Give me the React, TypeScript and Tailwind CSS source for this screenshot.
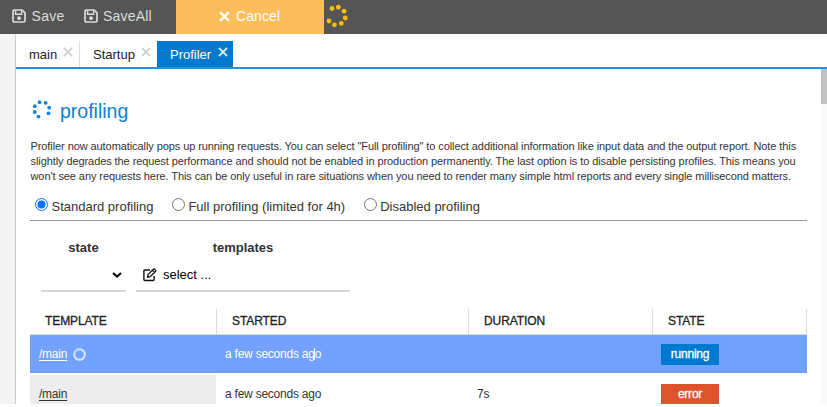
import type { ReactNode } from "react";

function SaveIcon() {
  return (
    <svg className="block h-[14px] w-[14px] shrink-0" viewBox="0 0 14 14" fill="none" stroke="#dcdcdc" strokeWidth="1.7">
      <path d="M1 2.2Q1 1 2.2 1H10.2L13 3.8V11.8Q13 13 11.8 13H2.2Q1 13 1 11.8Z" />
      <path d="M3.6 1.5V5.2H9.6V1.5" strokeWidth="1.4" />
      <circle cx="7" cy="9.2" r="1.9" fill="#dcdcdc" stroke="none" />
    </svg>
  );
}

function Cross({ className, color, width }: { className: string; color: string; width: number }) {
  return (
    <svg className={className} viewBox="0 0 10 10" stroke={color} strokeWidth={width}>
      <path d="M1 1L9 9M9 1L1 9" />
    </svg>
  );
}

function Dots({ className, points, color, r }: { className: string; points: number[][]; color: string; r: number }) {
  return (
    <svg className={className} viewBox="0 0 24 24" fill={color}>
      {points.map(([x, y]) => (
        <circle key={`${x}-${y}`} cx={x} cy={y} r={r} />
      ))}
    </svg>
  );
}

function EditIcon() {
  return (
    <svg className="block h-[14px] w-[14px] shrink-0" viewBox="0 0 14 14" fill="none" stroke="#111" strokeWidth="1.4">
      <path d="M7 2H2Q.9 2 .9 3.1V11.4Q.9 12.5 2 12.5H10Q11.1 12.5 11.1 11.4V8" />
      <path d="M4.6 9.2L5.1 6.6L10.6 1.1Q11 .8 11.4 1.1L12.7 2.4Q13 2.8 12.7 3.2L7.2 8.7ZM9.4 2.4L11.5 4.5" strokeWidth="1.3" />
    </svg>
  );
}

function Radio({ checked, children }: { checked?: boolean; children: ReactNode }) {
  return (
    <label className="flex items-start">
      <svg className="mr-[3.5px] block h-[13px] w-[13px]" viewBox="0 0 13 13" fill="white">
        <circle cx="6.5" cy="6.5" r="6" stroke={checked ? "#0075ff" : "#767676"} strokeWidth="1" />
        {checked && <circle cx="6.5" cy="6.5" r="4" fill="#0075ff" />}
      </svg>
      <span className="mt-[1px] text-[13px] leading-[15px]">{children}</span>
    </label>
  );
}

const cols = "grid grid-cols-[187px_252px_184px_154px]";

export default function App() {
  return (
    <div className="h-[407px] w-[827px] overflow-hidden bg-white">
      <div className="flex h-[404px] flex-col overflow-hidden bg-white font-['Liberation_Sans',Arial,sans-serif] text-[#333]">
        <header className="flex h-[34px] shrink-0 bg-[#555] text-[14px] text-[#dcdcdc]">
          <div className="flex w-[176px] items-center pb-[2px] pl-[12px]">
            <SaveIcon />
            <span className="ml-[5.5px] w-[52.5px] tracking-[0.3px]">Save</span>
            <SaveIcon />
            <span className="ml-[5px] tracking-[0.2px]">SaveAll</span>
          </div>
          <div className="flex w-[148px] items-center bg-[#fdbd5b] pb-[2px] pl-[43px] text-white">
            <Cross className="mr-[6px] h-[11px] w-[11px]" color="white" width={2.1} />
            <span className="tracking-[0.1px]">Cancel</span>
          </div>
          <Dots
            className="ml-[1px] mt-[4px] h-6 w-6"
            color="#f9bd10"
            r={2.4}
            points={[[7, 4.5], [13.3, 3.2], [19, 7.2], [20.3, 14], [16.3, 19.4], [9.4, 20.8], [4, 17]]}
          />
        </header>

        <div className="flex min-h-0 flex-1">
          <aside className="w-[16px] shrink-0 border-r border-[#ccc] bg-[#f4f4f4]" />
          <div className="flex min-w-0 flex-1 flex-col">
            <nav className="flex h-[35px] shrink-0 items-end border-b-2 border-[#1e93e6] text-[13px] leading-[15px] text-[#222]">
              <div className="flex h-[26px] w-[64px] border-r border-[#ddd] pl-[13px] pt-[6px]">
                <span className="w-[34px]">main</span>
                <Cross className="h-[10px] w-[10px]" color="#d3d3d3" width={2} />
              </div>
              <div className="flex h-[26px] w-[77px] pl-[13px] pt-[6px]">
                <span className="w-[47.5px]">Startup</span>
                <Cross className="h-[10px] w-[10px]" color="#d3d3d3" width={2} />
              </div>
              <div className="flex h-[26px] w-[76px] bg-[#0079cf] pl-[13px] pt-[6px] text-white">
                <span className="w-[47.5px]">Profiler</span>
                <Cross className="h-[10px] w-[10px]" color="#d5e8f6" width={1.8} />
              </div>
            </nav>

            <div className="flex min-h-0 flex-1">
              <main className="flex min-w-0 flex-1 flex-col pl-[14px]">
                <h1 className="mt-[30px] flex h-[24px] text-[19.5px] leading-[23px] text-[#0d7fd0]">
                  <Dots
                    className="mr-[6px] h-6 w-6"
                    color="#1584d2"
                    r={1.9}
                    points={[[9.6, 3.2], [15.6, 3.9], [4.8, 7.2], [19.2, 8.7], [4.7, 13], [18.5, 14.3], [8.5, 17.6]]}
                  />
                  <span className="pt-px">profiling</span>
                </h1>
                <p className="mt-[16px] whitespace-nowrap pl-[0.5px] text-[11px] leading-[15px] tracking-[-0.083px]">
                  Profiler now automatically pops up running requests. You can select "Full profiling" to collect additional information like input data and the output report. Note this
                  <br />
                  slightly degrades the request performance and should not be enabled in production permanently. The last option is to disable persisting profiles. This means you
                  <br />
                  won't see any requests here. This can be only useful in rare situations when you need to render many simple html reports and every single millisecond matters.
                </p>
                <div className="mt-[14px] flex h-[23px] w-[777px] shrink-0 gap-[18.5px] border-b border-[#999] pl-[5px]">
                  <Radio checked>Standard profiling</Radio>
                  <Radio>Full profiling (limited for 4h)</Radio>
                  <Radio>Disabled profiling</Radio>
                </div>
                <div className="mt-[19px] flex shrink-0 gap-[10px] pl-[11px] text-[13px] leading-[15px]">
                  <div className="w-[85px]">
                    <div className="text-center font-bold">state</div>
                    <div className="mt-[4px] flex h-[33px] items-center justify-end border-b-2 border-[#d6d6d6] pr-[4px]">
                      <svg className="h-[6px] w-[10px]" viewBox="0 0 10 6" fill="none" stroke="#000" strokeWidth="2">
                        <path d="M1 1L5 4.6L9 1" />
                      </svg>
                    </div>
                  </div>
                  <div className="w-[214px]">
                    <div className="text-center font-bold">templates</div>
                    <div className="mt-[4px] flex h-[33px] items-center border-b-2 border-[#d6d6d6] pl-[7px] text-black">
                      <EditIcon />
                      <span className="ml-[6px]">select ...</span>
                    </div>
                  </div>
                </div>

                <section className="mt-[17px] w-[777px] shrink-0 text-[12px]">
                  <div className={`${cols} h-[26px] border-b border-[#ddd] leading-[24px] tracking-[-0.1px] text-[#222]`}>
                    <span className="border-r border-[#ddd] pl-[15px] [-webkit-text-stroke:0.3px_#222]">TEMPLATE</span>
                    <span className="border-r border-[#ddd] pl-[15px] [-webkit-text-stroke:0.3px_#222]">STARTED</span>
                    <span className="border-r border-[#ddd] pl-[15px] [-webkit-text-stroke:0.3px_#222]">DURATION</span>
                    <span className="border-r border-[#ddd] pl-[15px] [-webkit-text-stroke:0.3px_#222]">STATE</span>
                  </div>
                  <div className={`${cols} h-[38px] items-center bg-[#73a1ff] tracking-[-0.23px] text-white`}>
                    <span className="flex items-center pl-[9px]">
                      <span className="underline underline-offset-2">/main</span>
                      <svg className="ml-[6px] h-[13px] w-[13px]" viewBox="0 0 13 13" fill="none" strokeWidth="2">
                        <circle cx="6.5" cy="6.5" r="5.3" stroke="#dce8ff" />
                        <path d="M6.5 1.2A5.3 5.3 0 0 0 1.2 6.5" stroke="#bdd3ff" />
                      </svg>
                    </span>
                    <span className="relative pl-[8px]">
                      a few seconds ago
                      <i className="absolute left-[97px] top-[3px] h-[12px] w-px bg-white" />
                    </span>
                    <span />
                    <span className="ml-[8px] h-[21px] w-[58px] bg-[#0079cf] text-center leading-[20px] [-webkit-text-stroke:0.3px_white]">running</span>
                  </div>
                  <div className={`${cols} mt-[2px] h-[38px] items-center tracking-[-0.23px]`}>
                    <span className="mr-px flex h-full items-center bg-[#ededed] pl-[9px]">
                      <span className="underline underline-offset-2">/main</span>
                    </span>
                    <span className="pl-[8px]">a few seconds ago</span>
                    <span className="pl-[8px]">7s</span>
                    <span className="ml-[8px] h-[21px] w-[58px] bg-[#dc532c] text-center leading-[20px] text-white [-webkit-text-stroke:0.3px_white]">error</span>
                  </div>
                </section>
              </main>
              <div className="w-[6px] shrink-0 bg-[#fafafa]">
                <div className="h-[35px] bg-[#c1c1c1]" />
              </div>
            </div>
          </div>
        </div>
      </div>
    </div>
  );
}
